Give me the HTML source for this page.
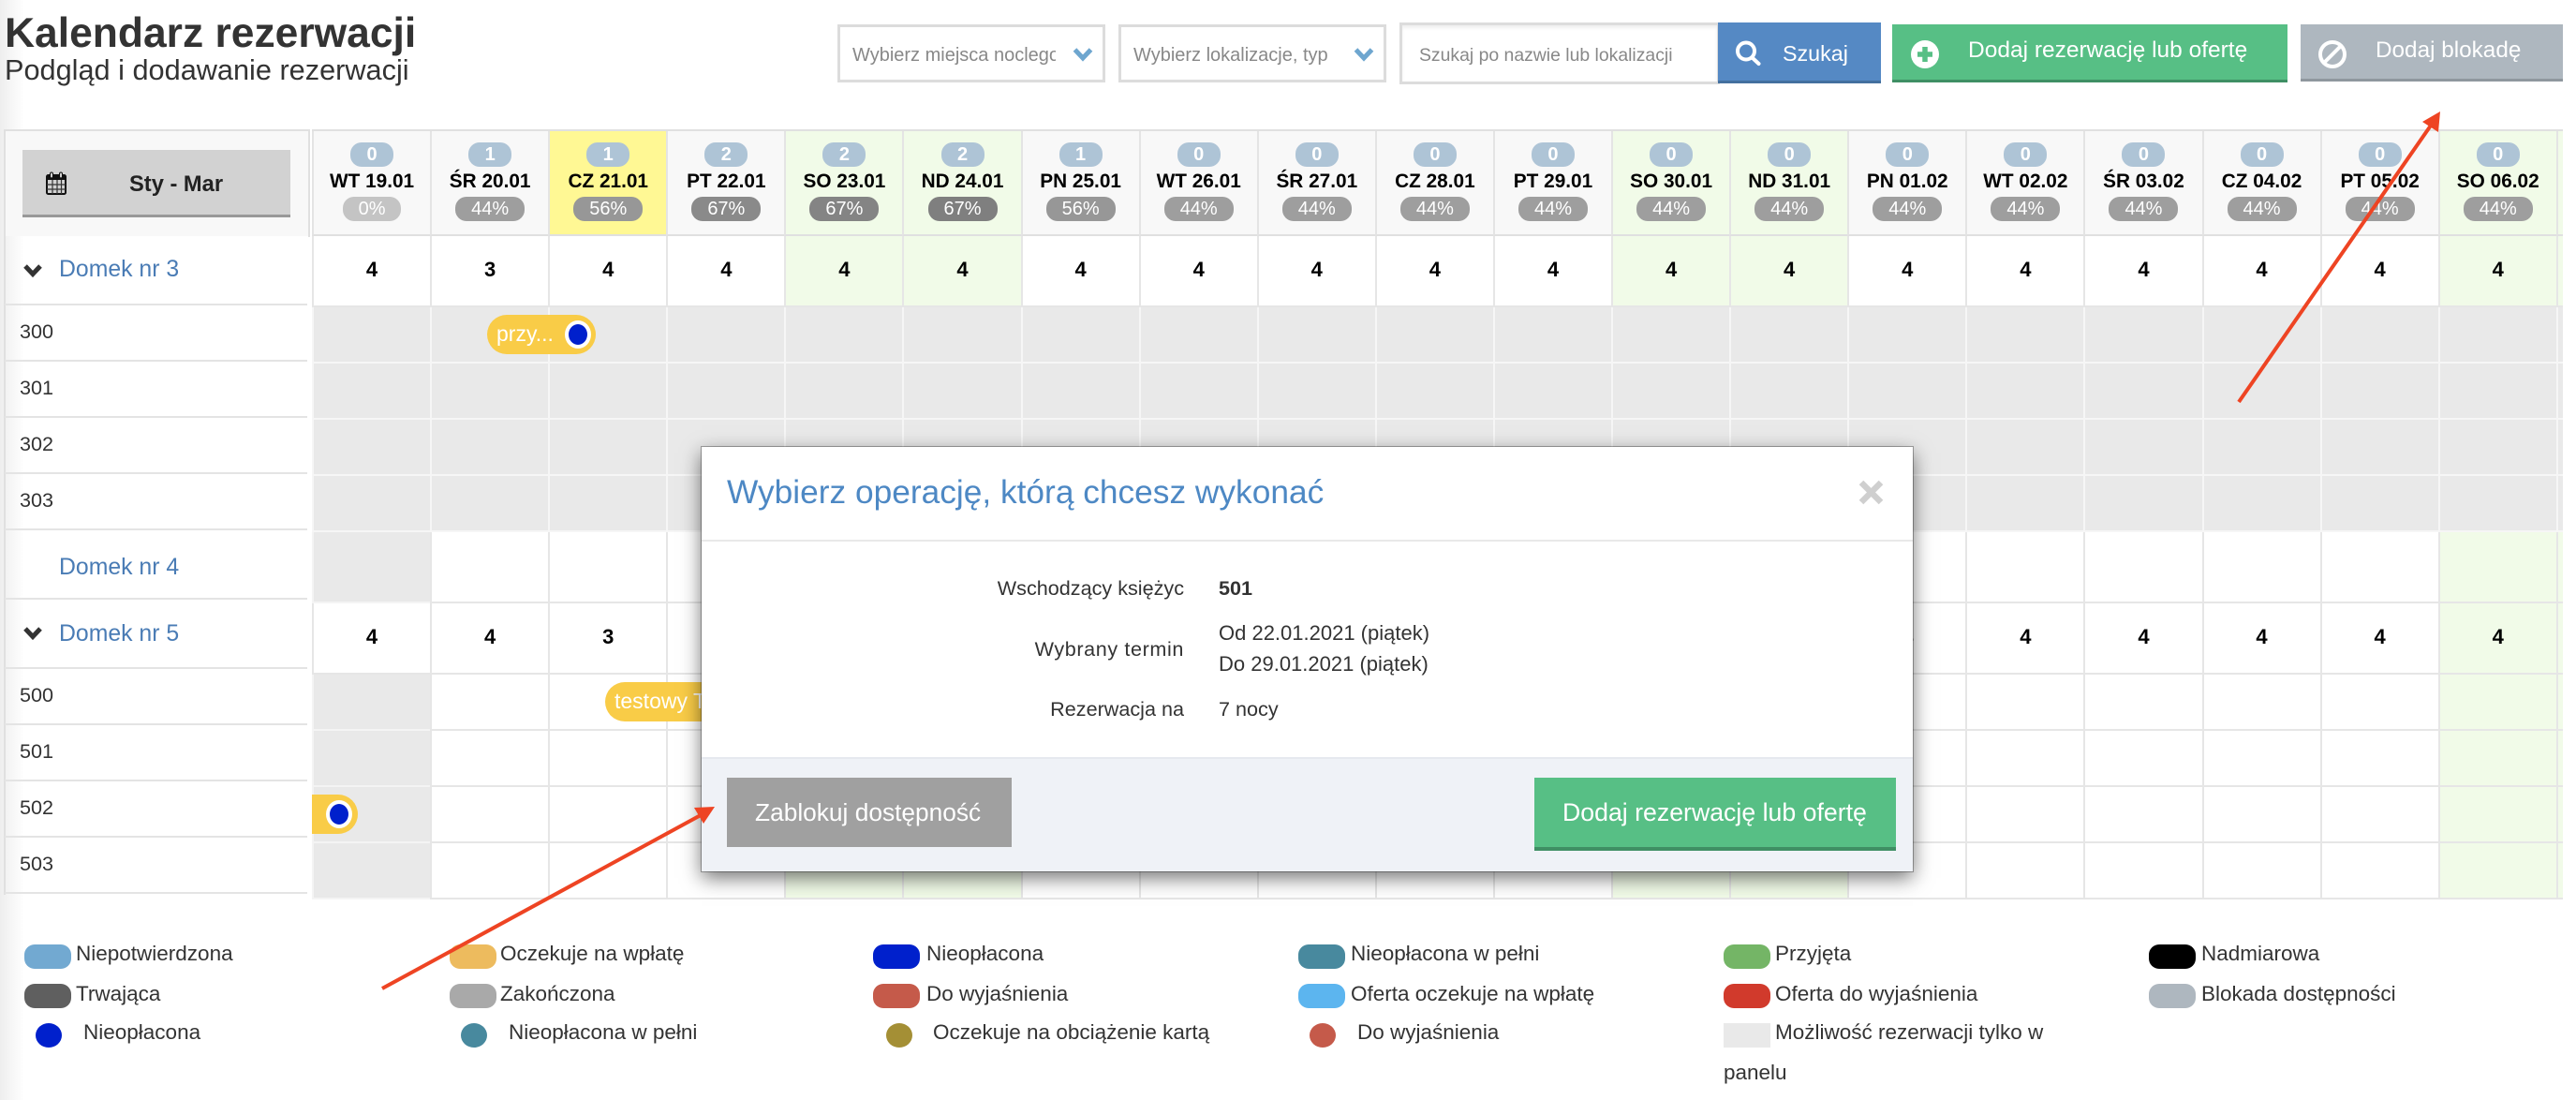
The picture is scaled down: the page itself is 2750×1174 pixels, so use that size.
<!DOCTYPE html>
<html lang="pl"><head><meta charset="utf-8"><title>Kalendarz rezerwacji</title>
<style>
*{box-sizing:border-box}
html,body{margin:0;padding:0}
body{width:2750px;height:1174px;position:relative;overflow:hidden;background:linear-gradient(90deg,#eee,#fff 26px);font-family:"Liberation Sans",sans-serif;color:#333}
.t{position:absolute;white-space:nowrap;line-height:30px;height:30px}
.b{position:absolute}
svg{position:absolute;overflow:visible}
.sel{position:absolute;top:26px;height:62px;width:286px;border:3px solid #dcdcdc;background:#fff}
.sel span{position:absolute;left:13px;top:15px;line-height:30px;font-size:20px;color:#888;white-space:nowrap;overflow:hidden}
.btn{position:absolute;color:#fff}
.r{position:absolute;left:333px;display:flex}
.r>*{flex:none;width:126.1px;height:100%;border-left:2px solid #e6e6e6;border-bottom:2px solid #e6e6e6;font-style:normal;font-weight:bold;font-size:22px;color:#000;text-align:center;background:#fff}
.n>*{line-height:72px}
.r>:nth-child(20){width:7px;overflow:hidden}
.r>:nth-child(5),.r>:nth-child(6),.r>:nth-child(12),.r>:nth-child(13),.r>:nth-child(19),.r>:nth-child(20){background:#f1fbe8}
.r.gr>i{background:#e9e9e9;border-color:#f6f6f6}
.r.f>:first-child{background:#e9e9e9;border-color:#f4f4f4}
.hd{top:138px;height:114px;border-top:2px solid #e0e0e0;width:2403px}
.hd>div{background:#f8f8f8;display:flex;flex-direction:column;align-items:center;padding-top:12px;border-bottom-width:2px;border-left-width:2px;border-left-color:#e4e4e4;border-bottom-color:#e0e0e0}
.hd>div.today{background:#fff894}
.a{display:block;width:46px;height:26px;border-radius:12px;background:#aec4d6;color:#fff;font-size:20px;line-height:26px;font-weight:bold}
.d{display:block;height:32px;line-height:32px;font-size:20.8px;font-weight:bold;white-space:nowrap}
.p{display:block;width:74px;height:26px;border-radius:12px;background:#9e9e9e;color:#fff;font-size:20px;line-height:26px;font-weight:normal}
.dom{font-size:24.8px;color:#4a7cb5;left:63px}
.rm{font-size:21.6px;left:21px;color:#333}
.ln{position:absolute;left:5px;width:323px;height:2px;background:#e4e4e4}
.pill{position:absolute;background:#f9cc47;height:42px;border-radius:21px;color:#fff;font-size:23px;line-height:40px;white-space:nowrap;overflow:hidden}
.ring{position:absolute;width:28px;height:30px;border-radius:50%;background:#0020cc;border:4px solid #fff}
.sw{position:absolute;width:50px;height:26px;border-radius:11px}
.dot{position:absolute;width:28px;height:26px;border-radius:50%;top:1092px}
.lg{font-size:22.5px;color:#333}
.modal{position:absolute;left:749px;top:477px;width:1293px;height:453px;background:#fff;box-shadow:0 0 0 1px rgba(0,0,0,.3),0 7px 20px rgba(0,0,0,.55)}
.modal .t{font-size:21.6px;color:#333}
</style></head><body>

<div class="t" style="left:5px;top:21px;font-size:44.4px;font-weight:bold;color:#333">Kalendarz rezerwacji</div>
<div class="t" style="left:5px;top:60px;font-size:30.7px;color:#333">Podgląd i dodawanie rezerwacji</div>

<div class="sel" style="left:894px"><span style="width:217px">Wybierz miejsca noclegowe</span><svg style="left:248px;top:22px" width="22" height="14" viewBox="0 0 22 14"><path d="M2.500 2 11 11 19.500 2" fill="none" stroke="#6ea6cf" stroke-width="5"/></svg></div>
<div class="sel" style="left:1194px"><span>Wybierz lokalizacje, typ</span><svg style="left:248px;top:22px" width="22" height="14" viewBox="0 0 22 14"><path d="M2.500 2 11 11 19.500 2" fill="none" stroke="#6ea6cf" stroke-width="5"/></svg></div>
<div class="sel" style="left:1494px;top:24px;height:66px;width:342px;box-shadow:inset 0 3px 3px #f0f0f0"><span style="left:18px;top:17px;font-size:19.400px">Szukaj po nazwie lub lokalizacji</span></div>

<div class="btn" style="left:1834px;top:24px;width:174px;height:65px;background:#5589c4;border-bottom:3px solid #43709f">
<svg style="left:17px;top:18px" width="30" height="30" viewBox="0 0 30 30"><circle cx="13" cy="12.500" r="9" fill="none" stroke="#fff" stroke-width="4"/><path d="M19.500 19.500 26.500 26" stroke="#fff" stroke-width="4" stroke-linecap="round"/></svg>
<div class="t" style="left:69px;top:18px;font-size:23.300px">Szukaj</div></div>

<div class="btn" style="left:2020px;top:26px;width:422px;height:62px;background:#57bf85;border-bottom:3px solid #3f8f64">
<svg style="left:20px;top:17px" width="30" height="30" viewBox="0 0 30 30"><circle cx="15" cy="15" r="15" fill="#fff"/><path d="M15 7V23M7 15H23" stroke="#57bf85" stroke-width="5.500"/></svg>
<div class="t" style="left:81px;top:13px;font-size:24.500px">Dodaj rezerwację lub ofertę</div></div>

<div class="btn" style="left:2456px;top:26px;width:280px;height:61px;background:#aeb7bf;border-bottom:3px solid #8f979e">
<svg style="left:19px;top:17px" width="30" height="30" viewBox="0 0 30 30"><circle cx="15" cy="15" r="13" fill="none" stroke="#fff" stroke-width="4"/><path d="M6 24 24 6" stroke="#fff" stroke-width="4"/></svg>
<div class="t" style="left:80px;top:13px;font-size:24.300px">Dodaj blokadę</div></div>

<!-- left column -->
<div class="b" style="left:5px;top:138px;width:326px;height:2px;background:#e0e0e0"></div>
<div class="b" style="left:5px;top:140px;width:324px;height:112px;background:#f8f8f8"></div>
<div class="b" style="left:329px;top:140px;width:2px;height:113px;background:#e0e0e0"></div>
<div class="b" style="left:4px;top:138px;width:2px;height:817px;background:#e0e0e0"></div>
<div class="b" style="left:24px;top:160px;width:286px;height:72px;background:#d2d2d2;border-bottom:3px solid #999"></div>
<svg style="left:49px;top:183px" width="22" height="25" viewBox="0 0 22 25"><rect x="1" y="4" width="20" height="20" rx="1.500" fill="#d2d2d2" stroke="#111" stroke-width="2"/><rect x="1" y="4" width="20" height="5" fill="#111"/><path d="M7 9V24M12 9V24M16.500 9V24M1 14H21M1 19H21" stroke="#333" stroke-width="1.200"/><rect x="4.500" y="1" width="3" height="6" rx="1.500" fill="#d2d2d2" stroke="#111"/><rect x="14.500" y="1" width="3" height="6" rx="1.500" fill="#d2d2d2" stroke="#111"/></svg>
<div class="t" style="left:138px;top:182px;font-size:23.700px;font-weight:bold;color:#222">Sty - Mar</div>

<svg style="left:25px;top:282px" width="20" height="14" viewBox="0 0 20 14"><path d="M2 2 10 10.500 18 2" fill="none" stroke="#333" stroke-width="5"/></svg>
<div class="t dom" style="top:273px">Domek nr 3</div>
<div class="ln" style="top:324px"></div>
<div class="t rm" style="top:339px">300</div>
<div class="ln" style="top:384px"></div>
<div class="t rm" style="top:399px">301</div>
<div class="ln" style="top:444px"></div>
<div class="t rm" style="top:459px">302</div>
<div class="ln" style="top:504px"></div>
<div class="t rm" style="top:519px">303</div>
<div class="ln" style="top:564px"></div>
<div class="t dom" style="top:591px">Domek nr 4</div>
<div class="ln" style="top:638px"></div>
<svg style="left:25px;top:669px" width="20" height="14" viewBox="0 0 20 14"><path d="M2 2 10 10.500 18 2" fill="none" stroke="#333" stroke-width="5"/></svg>
<div class="t dom" style="top:662px">Domek nr 5</div>
<div class="ln" style="top:712px"></div>
<div class="t rm" style="top:727px">500</div>
<div class="ln" style="top:772px"></div>
<div class="t rm" style="top:787px">501</div>
<div class="ln" style="top:832px"></div>
<div class="t rm" style="top:847px">502</div>
<div class="ln" style="top:892px"></div>
<div class="t rm" style="top:907px">503</div>
<div class="ln" style="top:952px"></div>

<!-- header row -->
<div class="r hd">
<div><b class="a">0</b><span class="d">WT 19.01</span><b class="p" style="width:62px;background:#c4c4c4">0%</b></div>
<div><b class="a">1</b><span class="d">ŚR 20.01</span><b class="p">44%</b></div>
<div class="today"><b class="a">1</b><span class="d">CZ 21.01</span><b class="p" style="background:#979797">56%</b></div>
<div><b class="a">2</b><span class="d">PT 22.01</span><b class="p" style="background:#8a8a8a">67%</b></div>
<div><b class="a">2</b><span class="d">SO 23.01</span><b class="p" style="background:#848484">67%</b></div>
<div><b class="a">2</b><span class="d">ND 24.01</span><b class="p" style="background:#7f7f7f">67%</b></div>
<div><b class="a">1</b><span class="d">PN 25.01</span><b class="p" style="background:#979797">56%</b></div>
<div><b class="a">0</b><span class="d">WT 26.01</span><b class="p">44%</b></div>
<div><b class="a">0</b><span class="d">ŚR 27.01</span><b class="p">44%</b></div>
<div><b class="a">0</b><span class="d">CZ 28.01</span><b class="p">44%</b></div>
<div><b class="a">0</b><span class="d">PT 29.01</span><b class="p">44%</b></div>
<div><b class="a">0</b><span class="d">SO 30.01</span><b class="p">44%</b></div>
<div><b class="a">0</b><span class="d">ND 31.01</span><b class="p">44%</b></div>
<div><b class="a">0</b><span class="d">PN 01.02</span><b class="p">44%</b></div>
<div><b class="a">0</b><span class="d">WT 02.02</span><b class="p">44%</b></div>
<div><b class="a">0</b><span class="d">ŚR 03.02</span><b class="p">44%</b></div>
<div><b class="a">0</b><span class="d">CZ 04.02</span><b class="p">44%</b></div>
<div><b class="a">0</b><span class="d">PT 05.02</span><b class="p">44%</b></div>
<div><b class="a">0</b><span class="d">SO 06.02</span><b class="p">44%</b></div>
<div style="padding:0"></div>
</div>

<!-- Domek 3 -->
<div class="r n" style="top:252px;height:76px"><i>4</i><i>3</i><i>4</i><i>4</i><i>4</i><i>4</i><i>4</i><i>4</i><i>4</i><i>4</i><i>4</i><i>4</i><i>4</i><i>4</i><i>4</i><i>4</i><i>4</i><i>4</i><i>4</i><i></i></div>
<div class="r gr" style="top:328px;height:60px"><i></i><i></i><i></i><i></i><i></i><i></i><i></i><i></i><i></i><i></i><i></i><i></i><i></i><i></i><i></i><i></i><i></i><i></i><i></i><i></i></div>
<div class="r gr" style="top:388px;height:60px"><i></i><i></i><i></i><i></i><i></i><i></i><i></i><i></i><i></i><i></i><i></i><i></i><i></i><i></i><i></i><i></i><i></i><i></i><i></i><i></i></div>
<div class="r gr" style="top:448px;height:60px"><i></i><i></i><i></i><i></i><i></i><i></i><i></i><i></i><i></i><i></i><i></i><i></i><i></i><i></i><i></i><i></i><i></i><i></i><i></i><i></i></div>
<div class="r gr" style="top:508px;height:60px"><i></i><i></i><i></i><i></i><i></i><i></i><i></i><i></i><i></i><i></i><i></i><i></i><i></i><i></i><i></i><i></i><i></i><i></i><i></i><i></i></div>
<!-- Domek 4 -->
<div class="r f" style="top:568px;height:76px"><i></i><i></i><i></i><i></i><i></i><i></i><i></i><i></i><i></i><i></i><i></i><i></i><i></i><i></i><i></i><i></i><i></i><i></i><i></i><i></i></div>
<!-- Domek 5 -->
<div class="r n" style="top:644px;height:76px"><i>4</i><i>4</i><i>3</i><i>4</i><i>4</i><i>4</i><i>4</i><i>4</i><i>4</i><i>4</i><i>4</i><i>4</i><i>4</i><i>4</i><i>4</i><i>4</i><i>4</i><i>4</i><i>4</i><i></i></div>
<div class="r f" style="top:720px;height:60px"><i></i><i></i><i></i><i></i><i></i><i></i><i></i><i></i><i></i><i></i><i></i><i></i><i></i><i></i><i></i><i></i><i></i><i></i><i></i><i></i></div>
<div class="r f" style="top:780px;height:60px"><i></i><i></i><i></i><i></i><i></i><i></i><i></i><i></i><i></i><i></i><i></i><i></i><i></i><i></i><i></i><i></i><i></i><i></i><i></i><i></i></div>
<div class="r f" style="top:840px;height:60px"><i></i><i></i><i></i><i></i><i></i><i></i><i></i><i></i><i></i><i></i><i></i><i></i><i></i><i></i><i></i><i></i><i></i><i></i><i></i><i></i></div>
<div class="r f" style="top:900px;height:60px"><i></i><i></i><i></i><i></i><i></i><i></i><i></i><i></i><i></i><i></i><i></i><i></i><i></i><i></i><i></i><i></i><i></i><i></i><i></i><i></i></div>

<!-- bookings -->
<div class="pill" style="left:520px;top:336px;width:116px;padding-left:10px">przy...</div>
<div class="ring" style="left:603px;top:342px"></div>
<div class="pill" style="left:646px;top:728px;width:140px;padding-left:10px">testowy Test</div>
<div class="pill" style="left:333px;top:848px;width:49px;border-radius:0 21px 21px 0"></div>
<div class="ring" style="left:348px;top:854px"></div>

<!-- legend -->
<div class="sw" style="left:26px;top:1008px;background:#72a9d1"></div><div class="t lg" style="left:81px;top:1003px">Niepotwierdzona</div>
<div class="sw" style="left:480px;top:1008px;background:#edbb5e"></div><div class="t lg" style="left:534px;top:1003px">Oczekuje na wpłatę</div>
<div class="sw" style="left:932px;top:1008px;background:#0020cc"></div><div class="t lg" style="left:989px;top:1003px">Nieopłacona</div>
<div class="sw" style="left:1386px;top:1008px;background:#48899e"></div><div class="t lg" style="left:1442px;top:1003px">Nieopłacona w pełni</div>
<div class="sw" style="left:1840px;top:1008px;background:#74b566"></div><div class="t lg" style="left:1895px;top:1003px">Przyjęta</div>
<div class="sw" style="left:2294px;top:1008px;background:#000"></div><div class="t lg" style="left:2350px;top:1003px">Nadmiarowa</div>

<div class="sw" style="left:26px;top:1050px;background:#5f5f5f"></div><div class="t lg" style="left:81px;top:1046px">Trwająca</div>
<div class="sw" style="left:480px;top:1050px;background:#a9a9a9"></div><div class="t lg" style="left:534px;top:1046px">Zakończona</div>
<div class="sw" style="left:932px;top:1050px;background:#c55a4a"></div><div class="t lg" style="left:989px;top:1046px">Do wyjaśnienia</div>
<div class="sw" style="left:1386px;top:1050px;background:#5cb5ef"></div><div class="t lg" style="left:1442px;top:1046px">Oferta oczekuje na wpłatę</div>
<div class="sw" style="left:1840px;top:1050px;background:#d13a2c"></div><div class="t lg" style="left:1895px;top:1046px">Oferta do wyjaśnienia</div>
<div class="sw" style="left:2294px;top:1050px;background:#aeb7bf"></div><div class="t lg" style="left:2350px;top:1046px">Blokada dostępności</div>

<div class="dot" style="left:38px;background:#0020cc"></div><div class="t lg" style="left:89px;top:1087px">Nieopłacona</div>
<div class="dot" style="left:492px;background:#48899e"></div><div class="t lg" style="left:543px;top:1087px">Nieopłacona w pełni</div>
<div class="dot" style="left:946px;background:#a48f35"></div><div class="t lg" style="left:996px;top:1087px">Oczekuje na obciążenie kartą</div>
<div class="dot" style="left:1398px;background:#c55a4a"></div><div class="t lg" style="left:1449px;top:1087px">Do wyjaśnienia</div>
<div class="b" style="left:1840px;top:1092px;width:50px;height:26px;background:#e9e9e9"></div><div class="t lg" style="left:1895px;top:1087px">Możliwość rezerwacji tylko w</div>
<div class="t lg" style="left:1840px;top:1130px">panelu</div>

<!-- modal -->
<div class="modal">
<div class="t" style="left:27px;top:34px;font-size:35.300px;color:#4d88c4">Wybierz operację, którą chcesz wykonać</div>
<svg style="left:1235px;top:36px" width="27" height="25" viewBox="0 0 27 25"><path d="M3 2 24 23M24 2 3 23" stroke="#cfcfcf" stroke-width="6.500"/></svg>
<div class="b" style="left:0;top:99px;width:100%;height:2px;background:#e9e9e9"></div>
<div class="t" style="left:0;width:515px;text-align:right;top:136px">Wschodzący księżyc</div>
<div class="t" style="left:552px;top:136px;font-weight:bold">501</div>
<div class="t" style="left:0;width:515px;text-align:right;top:201px;letter-spacing:.6px">Wybrany termin</div>
<div class="t" style="left:552px;top:184px;font-size:22px">Od 22.01.2021 (piątek)</div>
<div class="t" style="left:552px;top:217px;font-size:22px">Do 29.01.2021 (piątek)</div>
<div class="t" style="left:0;width:515px;text-align:right;top:265px">Rezerwacja na</div>
<div class="t" style="left:552px;top:265px">7 nocy</div>
<div class="b" style="left:0;top:331px;width:100%;height:122px;background:#eff2f7;border-top:2px solid #e6e9ef"></div>
<div class="btn" style="left:27px;top:353px;width:304px;height:74px;background:#a0a0a0"><div class="t" style="left:30px;top:22px;font-size:26.300px;color:#fff">Zablokuj dostępność</div></div>
<div class="btn" style="left:889px;top:353px;width:386px;height:78px;background:#57bf85;border-bottom:4px solid #3f8f64"><div class="t" style="left:30px;top:22px;font-size:26.700px;color:#fff">Dodaj rezerwację lub ofertę</div></div>
</div>

<!-- annotation arrows -->
<svg style="left:0;top:0" width="2750" height="1174" viewBox="0 0 2750 1174">
<path d="M2390 429 2597 131" stroke="#ee4423" stroke-width="4" fill="none"/>
<path d="M2605 119 2586 130 2603 141Z" fill="#ee4423"/>
<path d="M408 1055 748 870" stroke="#ee4423" stroke-width="4" fill="none"/>
<path d="M763 861 741 862 751 879Z" fill="#ee4423"/>
</svg>
</body></html>
